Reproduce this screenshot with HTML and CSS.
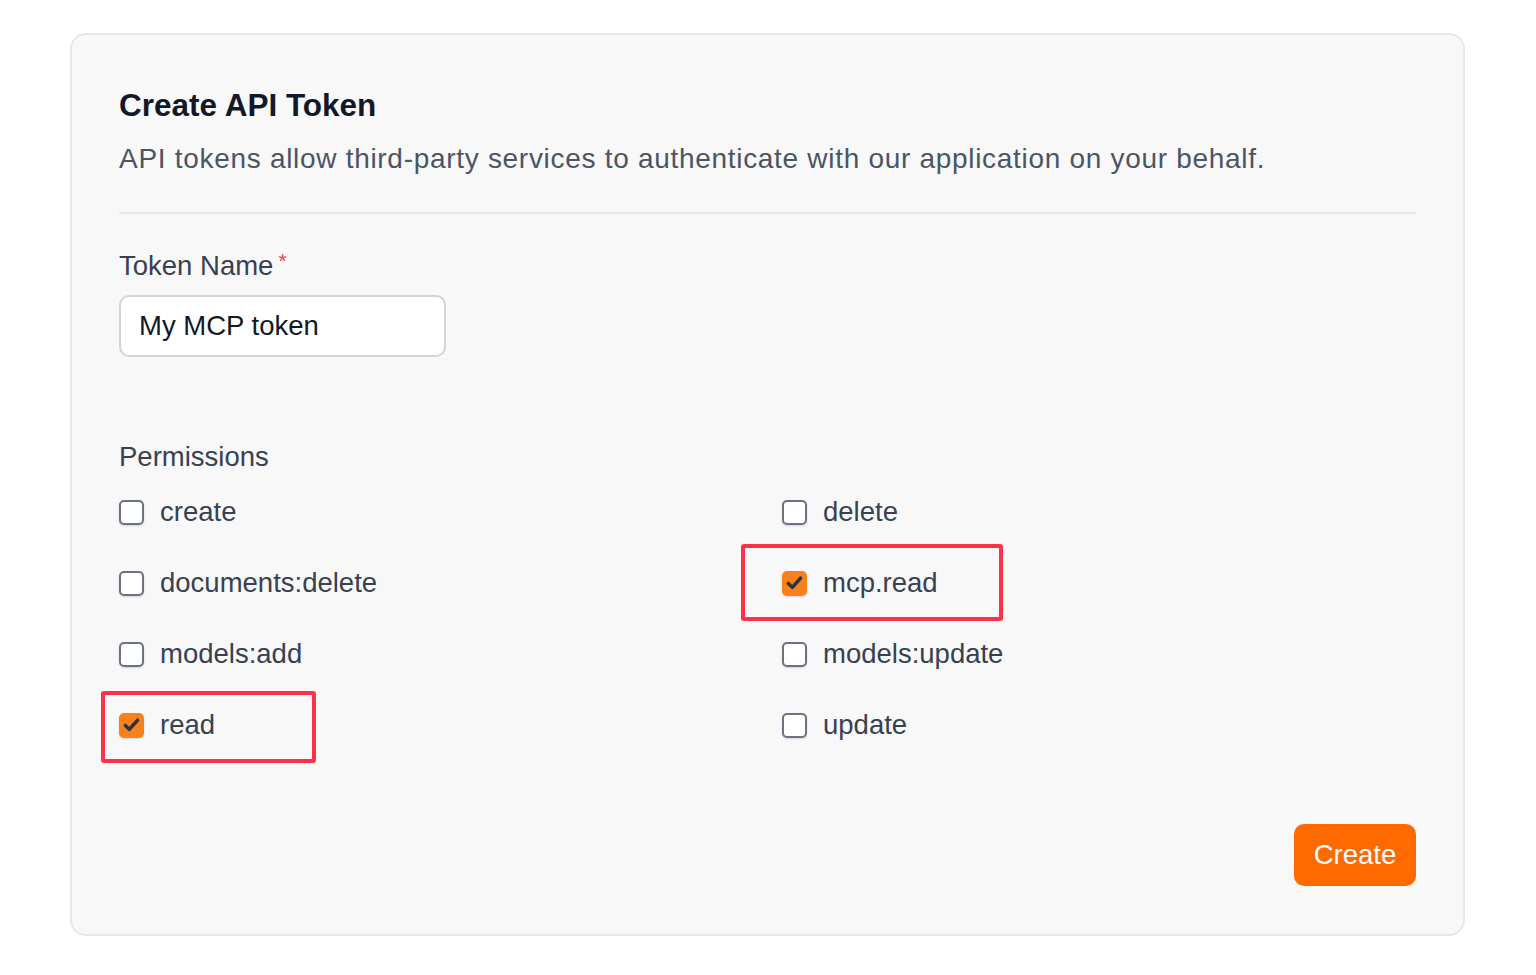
FILE: index.html
```html
<!DOCTYPE html>
<html lang="en">
<head>
  <meta charset="UTF-8">
  <title>Create API Token</title>
  <link rel="stylesheet" href="styles.css">
</head>
<body>
  <div class="token-card">
    <h2 class="title">Create API Token</h2>
    <p class="subtitle">API tokens allow third-party services to authenticate with our application on your behalf.</p>
    <hr class="divider">

    <label class="field-label" for="tokenName">Token Name<span class="required">*</span></label>
    <input class="text-input" type="text" id="tokenName" value="My MCP token">

    <div class="field-label perms-label">Permissions</div>
    <div class="perm-grid">
      <label class="perm"><span class="box"></span>create</label>
      <label class="perm"><span class="box"></span>delete</label>
      <label class="perm"><span class="box"></span>documents:delete</label>
      <label class="perm">
        <span class="box checked"><svg viewBox="0 0 24 24"><path d="M5 12.5l4.5 4.5L19 6.5" /></svg></span>mcp.read
        <span class="highlight hl-mcp"></span>
      </label>
      <label class="perm"><span class="box"></span>models:add</label>
      <label class="perm"><span class="box"></span>models:update</label>
      <label class="perm">
        <span class="box checked"><svg viewBox="0 0 24 24"><path d="M5 12.5l4.5 4.5L19 6.5" /></svg></span>read
        <span class="highlight hl-read"></span>
      </label>
      <label class="perm"><span class="box"></span>update</label>
    </div>

    <div class="actions">
      <button class="create-btn" type="button">Create</button>
    </div>
  </div>
</body>
</html>
```

FILE: styles.css
```css
body {
  margin: 0;
  background: #ffffff;
  font-family: "Liberation Sans", Arial, Helvetica, sans-serif;
  padding: 33px 70px 0 70px;
}
.token-card {
  width: 1297px;
  background: #f8f8f8;
  border: 2px solid #e5e7eb;
  border-radius: 16px;
  padding: 52px 47px 48px 47px;
}
.title {
  margin: 0 0 18px;
  font-size: 31.5px;
  line-height: 36px;
  font-weight: bold;
  color: #111827;
}
.subtitle {
  margin: 0;
  font-size: 28px;
  line-height: 36px;
  letter-spacing: 0.7px;
  color: #4b5563;
}
.divider {
  border: none;
  border-top: 2px solid #e5e7eb;
  margin: 35px 0 35px;
}
.field-label {
  display: block;
  font-size: 27.5px;
  line-height: 34px;
  color: #374151;
}
.required {
  color: #ef4444;
  font-size: 21px;
  margin-left: 5px;
  vertical-align: top;
  position: relative;
  top: -5px;
}
.text-input {
  display: block;
  margin-top: 12px;
  width: 327px;
  height: 62px;
  box-sizing: border-box;
  padding: 0 18px;
  border: 2px solid #d1d5db;
  border-radius: 10px;
  background: #ffffff;
  font-family: "Liberation Sans", Arial, sans-serif;
  font-size: 27.5px;
  color: #111827;
}
.perms-label {
  margin-top: 83px;
}
.perm-grid {
  margin-top: 22px;
  display: grid;
  grid-template-columns: 1fr 1fr;
  column-gap: 29px;
  row-gap: 39px;
}
.perm {
  position: relative;
  display: flex;
  align-items: center;
  gap: 16px;
  height: 32px;
  font-size: 27.5px;
  color: #374151;
}
.box {
  width: 25px;
  height: 25px;
  box-sizing: border-box;
  border: 2px solid #6b7280;
  border-radius: 5px;
  background: #ffffff;
  box-shadow: 0 1px 2px rgba(0,0,0,0.15);
  display: flex;
  align-items: center;
  justify-content: center;
}
.box.checked {
  background: #f7821b;
  border-color: #f7821b;
}
.box svg {
  width: 22px;
  height: 22px;
  fill: none;
  stroke: #2d3340;
  stroke-width: 4;
  stroke-linecap: round;
  stroke-linejoin: round;
}
.highlight {
  position: absolute;
  border: 4px solid #ff3148;
  border-radius: 3px;
  box-sizing: border-box;
}
.hl-mcp {
  left: -41px;
  top: -23px;
  width: 262px;
  height: 77px;
}
.hl-read {
  left: -18px;
  top: -18px;
  width: 215px;
  height: 72px;
}
.actions {
  display: flex;
  justify-content: flex-end;
  margin-top: 83px;
}
.create-btn {
  width: 122px;
  height: 62px;
  border: none;
  border-radius: 10px;
  background: #ff6a00;
  color: #ffffff;
  font-family: "Liberation Sans", Arial, sans-serif;
  font-size: 27.5px;
  cursor: pointer;
}
```
